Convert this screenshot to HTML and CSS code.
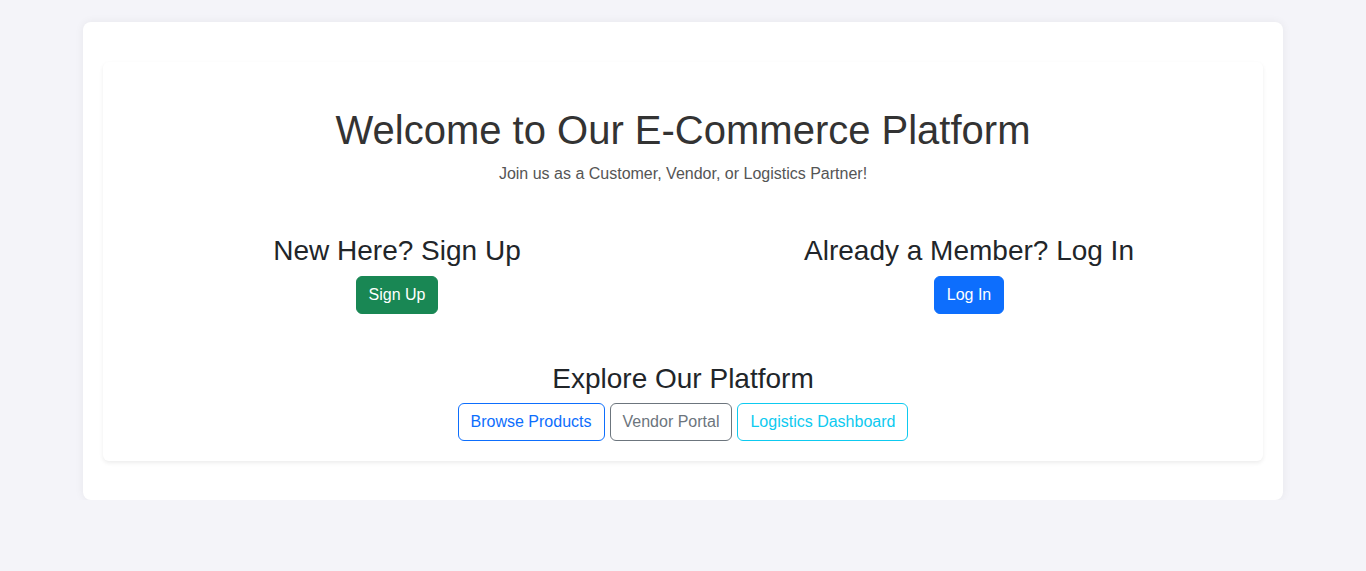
FILE: index.html
```html
<!DOCTYPE html>
<html lang="en">
<head>
<meta charset="utf-8">
<title>E-Commerce Platform</title>
<link rel="stylesheet" href="styles.css">
</head>
<body>
<div class="page">
  <div class="card">
    <header class="intro">
      <h1 class="title">Welcome to Our E-Commerce Platform</h1>
      <p class="subtitle">Join us as a Customer, Vendor, or Logistics Partner!</p>
    </header>
    <div class="row">
      <div class="col">
        <h3 class="heading">New Here? Sign Up</h3>
        <a class="btn btn-success" href="#">Sign Up</a>
      </div>
      <div class="col">
        <h3 class="heading">Already a Member? Log In</h3>
        <a class="btn btn-primary" href="#">Log In</a>
      </div>
    </div>
    <section class="explore">
      <h3 class="heading">Explore Our Platform</h3>
      <div class="btn-group">
        <a class="btn btn-outline-primary" href="#">Browse Products</a>
        <a class="btn btn-outline-secondary" href="#">Vendor Portal</a>
        <a class="btn btn-outline-info" href="#">Logistics Dashboard</a>
      </div>
    </section>
  </div>
</div>
</body>
</html>
```
FILE: styles.css
```css
* { box-sizing: border-box; }
html, body { margin: 0; }
body {
  background: #f4f4f9;
  font-family: "Liberation Sans", Arial, sans-serif;
  font-size: 16px;
  line-height: 1.5;
  color: #212529;
  padding-top: 22px;
}
.page {
  max-width: 1200px;
  margin: 0 auto;
  background: #fff;
  border-radius: 8px;
  box-shadow: 0 0 10px rgba(0,0,0,0.06);
  padding: 20px;
}
.card {
  margin: 20px 0 19px;
  background: #fff;
  border-radius: 6px;
  box-shadow: 0 2px 4px rgba(0,0,0,0.075);
  padding: 20px;
}
.intro {
  text-align: center;
  padding-top: 24px;
}
.title {
  margin: 0 0 8px;
  font-size: 40px;
  font-weight: 400;
  line-height: 1.2;
  color: #333;
}
.subtitle {
  margin: 0 0 16px;
  color: #555;
}
.row {
  display: flex;
  margin: 48px -12px 0;
}
.col {
  flex: 1 1 0;
  padding: 0 12px;
  text-align: center;
}
.heading {
  margin: 0 0 8px;
  font-size: 28px;
  font-weight: 400;
  line-height: 1.2;
  color: #212529;
}
.explore {
  margin-top: 48px;
  text-align: center;
}
.btn-group {
  display: flex;
  justify-content: center;
  gap: 5px;
}
.btn {
  display: inline-block;
  padding: 6px 12px;
  font-size: 16px;
  line-height: 1.5;
  border: 1px solid transparent;
  border-radius: 6px;
  text-decoration: none;
}
.btn-success { background: #198754; border-color: #198754; color: #fff; }
.btn-primary { background: #0d6efd; border-color: #0d6efd; color: #fff; }
.btn-outline-primary { border-color: #0d6efd; color: #0d6efd; }
.btn-outline-secondary { border-color: #6c757d; color: #6c757d; }
.btn-outline-info { border-color: #0dcaf0; color: #0dcaf0; }
```
